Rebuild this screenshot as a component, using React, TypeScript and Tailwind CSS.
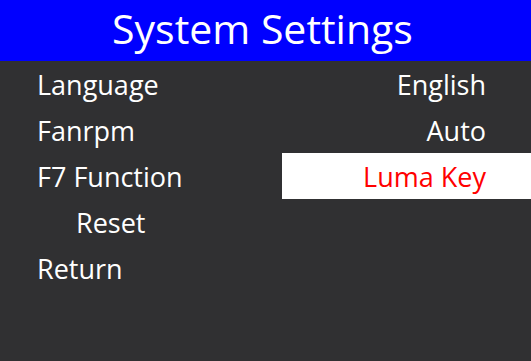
export default function App() {
  const rows: { label: string; value?: string; indent?: boolean; active?: boolean }[] = [
    { label: "Language", value: "English" },
    { label: "Fanrpm", value: "Auto" },
    { label: "F7 Function", value: "Luma Key", active: true },
    { label: "Reset", indent: true },
    { label: "Return" },
  ];
  return (
    <div
      className="w-[531px] h-[361px] bg-[#303032] flex flex-col"
      style={{ fontFamily: '"Open Sans", "Noto Sans", sans-serif' }}
    >
      <div className="h-[61px] bg-[#0000ff] flex items-center justify-center text-white text-[41px] leading-none pb-[5px] pr-[6px]">
        System Settings
      </div>
      <div className="flex flex-col">
        {rows.map((r) => (
          <div key={r.label} className="h-[46px] grid grid-cols-[282px_249px] text-[27px] leading-none">
            <div className={`flex items-center text-white ${r.indent ? "pl-[76px]" : "pl-[37px]"}`}>{r.label}</div>
            <div
              className={`flex items-center justify-end pr-[45px] ${
                r.active ? "bg-white text-[#ff0000]" : "text-white"
              }`}
            >
              {r.value}
            </div>
          </div>
        ))}
      </div>
    </div>
  );
}
